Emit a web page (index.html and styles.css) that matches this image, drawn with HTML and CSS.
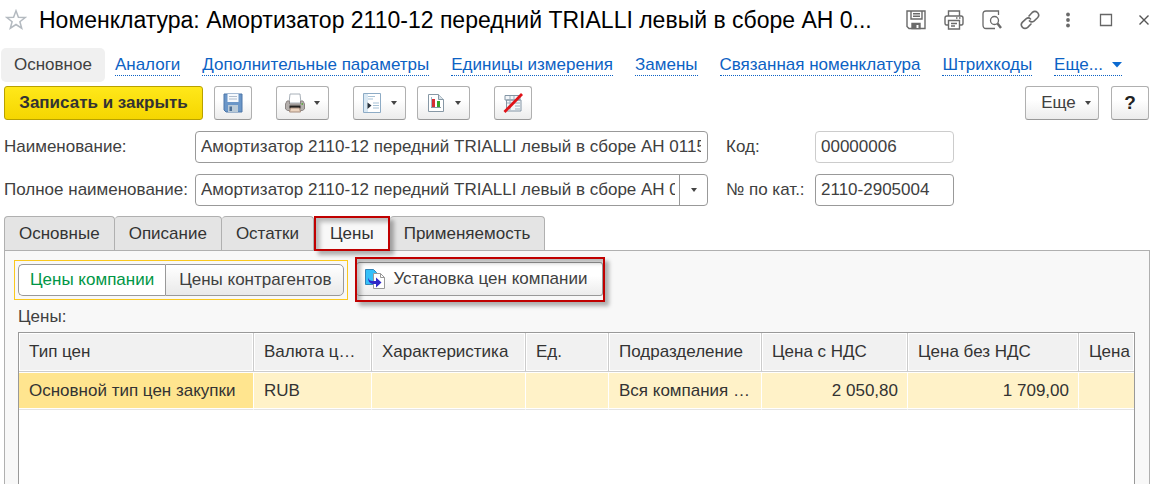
FILE: index.html
```html
<!DOCTYPE html>
<html lang="ru">
<head>
<meta charset="utf-8">
<title>Номенклатура</title>
<link rel="stylesheet" href="styles.css">
</head>
<body>
<header class="titlebar">
  <button class="icon-btn star" aria-label="Избранное">
    <svg width="22" height="22" viewBox="0 0 22 22"><path d="M11 1.8l2.4 6.4 6.8.3-5.300 4.200 1.800 6.500L11 15.500l-5.700 3.700 1.800-6.500L1.800 8.500l6.800-.3z" fill="none" stroke="#b4bac0" stroke-width="1.500"/></svg>
  </button>
  <h1 class="title">Номенклатура: Амортизатор 2110-12 передний TRIALLI левый в сборе АН 0...</h1>
  <div class="window-tools">
    <button class="icon-btn" aria-label="Сохранить">
      <svg width="20" height="20" viewBox="0 0 20 20" fill="none" stroke="#6a6a6a" stroke-width="1.400"><path d="M1 1h18v17.500H3L1 16.500z"/><path d="M5 1v8h11V1M7 3.800h7M7 6.300h7"/><path d="M6 18.500v-5h8v5z" fill="#6a6a6a"/><path d="M11.500 15v3" stroke="#fff" stroke-width="2"/></svg>
    </button>
    <button class="icon-btn" aria-label="Печать">
      <svg width="20" height="20" viewBox="0 0 20 20" fill="none" stroke="#6a6a6a" stroke-width="1.400"><path d="M4.500 6V1h11v5M4 15H2.500Q1 15 1 13V8q0-2 2-2h14q2 0 2 2v5q0 2-1.500 2H16"/><path d="M4.500 10.500h11V19h-11zM7 13.500h6M7 16h4M12 8h1.500M15 8h1.500"/></svg>
    </button>
    <button class="icon-btn" aria-label="Просмотр">
      <svg width="20" height="20" viewBox="0 0 20 20" fill="none" stroke="#6a6a6a" stroke-width="1.300"><path d="M16.500 5V1H4Q1 1 1 4v11q0 3.500 3 3.500h9"/><circle cx="12.500" cy="10.500" r="4"/><path d="M15.500 13.500l3.500 4.500" stroke-width="2.400"/></svg>
    </button>
    <button class="icon-btn" aria-label="Ссылка">
      <svg width="20" height="20" viewBox="0 0 20 20" fill="none" stroke="#6a6a6a" stroke-width="1.600" stroke-linecap="round"><path d="M9 6l3.200-3.500q2.800-2.200 5.300 0 2.500 2.800 0 5.300l-3.500 3.300q-2.500 1.700-4.500-.2M11 14l-3.300 3.300q-2.800 2.300-5.200 0-2.500-2.500 0-5.200L6 8.800q2.500-1.800 4.500.2"/></svg>
    </button>
    <button class="icon-btn" aria-label="Меню">
      <svg width="20" height="20" viewBox="0 0 20 20" fill="#6a6a6a"><circle cx="10" cy="4.500" r="1.900"/><circle cx="10" cy="10" r="1.900"/><circle cx="10" cy="15.500" r="1.900"/></svg>
    </button>
    <button class="icon-btn" aria-label="Развернуть">
      <svg width="20" height="20" viewBox="0 0 20 20"><path d="M4.500 4.500h11v11h-11z" fill="none" stroke="#666" stroke-width="1.300"/></svg>
    </button>
    <button class="icon-btn" aria-label="Закрыть">
      <svg width="20" height="20" viewBox="0 0 20 20"><path d="M5.500 5.500l9 9M14.500 5.500l-9 9" stroke="#555" stroke-width="1.400"/></svg>
    </button>
  </div>
</header>

<nav class="nav">
  <span class="nav-current">Основное</span>
  <a href="#">Аналоги</a>
  <a href="#">Дополнительные параметры</a>
  <a href="#">Единицы измерения</a>
  <a href="#">Замены</a>
  <a href="#">Связанная номенклатура</a>
  <a href="#">Штрихкоды</a>
  <a href="#" class="nav-more">Еще... <svg width="10" height="6" viewBox="0 0 10 6"><path d="M0 0h10L5 5.500z" fill="#0c6ad0"/></svg></a>
</nav>

<div class="toolbar">
  <button class="btn primary">Записать и закрыть</button>
  <button class="btn square" aria-label="Записать">
    <svg width="20" height="20" viewBox="0 0 20 20"><path d="M1 1h18v18H3l-2-2z" fill="#6a96c8" stroke="#4c76a8"/><path d="M4.500 1h11v8h-11z" fill="#f6f9fd"/><path d="M6 3.500h8M6 6h8" stroke="#b0bccb"/><path d="M5 12h10v7H5z" fill="#b9cad8"/><path d="M6.500 13.500H9V18H6.500z" fill="#4c6f96"/></svg>
  </button>
  <button class="btn drop" aria-label="Печать">
    <svg width="20" height="20" viewBox="0 0 20 20"><path d="M5 1h10l1 9H4z" fill="#fff" stroke="#a8b0b8"/><path d="M2 8h2.500v3h11V8H18l1.500 3v5l-2 1.500h-15L.5 16v-5z" fill="#b4afac" stroke="#8b8583"/><path d="M4.500 12.500h11v3h-11z" fill="#252321"/><path d="M5.500 15h9l1 4h-11z" fill="#ecd4bf" stroke="#a58c7c"/><path d="M16.500 11h1.500" stroke="#67a94b" stroke-width="2"/></svg>
    <i class="caret"></i>
  </button>
  <button class="btn drop" aria-label="Создать на основании">
    <svg width="20" height="20" viewBox="0 0 20 20"><path d="M1.500.5h17v19h-17z" fill="#fff" stroke="#8dabc5"/><path d="M2 1h4v18H2z" fill="#d9e8f3"/><path d="M6 3.500h7M6 6h5M11 10h6M11 12.500h6M11 15h6" stroke="#a7c2d6" stroke-width="1.200"/><path d="M5.500 9.500L9.500 12.500l-4 3.500z" fill="#28323c"/></svg>
    <i class="caret"></i>
  </button>
  <button class="btn drop near" aria-label="Отчеты">
    <svg width="20" height="20" viewBox="0 0 20 20"><path d="M2.500 1.500h10l5 5v12h-15z" fill="#fff" stroke="#8798a5"/><path d="M12.500 1.500v5h5" fill="#d8e1e8" stroke="#8798a5"/><path d="M5.500 4v10" stroke="#9fb7ca"/><path d="M6 6h3v8H6z" fill="#d62e32"/><path d="M11 8h3v6h-3z" fill="#37a32c"/><path d="M5 14.500h10" stroke="#8798a5"/></svg>
    <i class="caret"></i>
  </button>
  <button class="btn square" aria-label="Отключить">
    <svg width="20" height="20" viewBox="0 0 20 20"><path d="M2 2.500h15V7H2zM3.500 7v11H18V7z" fill="#f3f6f9" stroke="#8496a5"/><path d="M7 3v14M11 3v5M4 10h13M12 13h5M12 16h5" stroke="#9dafbd"/><path d="M19 1L1.500 19" stroke="#e01218" stroke-width="2.800"/></svg>
  </button>
  <button class="btn drop more">Еще <i class="caret"></i></button>
  <button class="btn square help">?</button>
</div>

<form class="fields">
  <label for="name">Наименование:</label>
  <input id="name" value="Амортизатор 2110-12 передний TRIALLI левый в сборе АН 01153">
  <label for="code">Код:</label>
  <input id="code" class="muted" value="00000006">
  <label for="full">Полное наименование:</label>
  <div class="combo">
    <input id="full" value="Амортизатор 2110-12 передний TRIALLI левый в сборе АН 01153">
    <button type="button" aria-label="Выбрать"><i class="caret"></i></button>
  </div>
  <label for="cat">№ по кат.:</label>
  <input id="cat" value="2110-2905004">
</form>

<div class="tabs" role="tablist">
  <button class="tab" role="tab">Основные</button>
  <button class="tab" role="tab">Описание</button>
  <button class="tab" role="tab">Остатки</button>
  <button class="tab active marked" role="tab" aria-selected="true">Цены</button>
  <button class="tab" role="tab">Применяемость</button>
</div>

<main class="panel">
  <div class="commands">
    <div class="switch">
      <button class="seg on">Цены компании</button><button class="seg">Цены контрагентов</button>
    </div>
    <div class="command marked">
      <button class="btn set-prices">
        <svg width="20" height="20" viewBox="0 0 20 20"><path d="M.5.500h8l3 3v12H.5z" fill="#35c0f8" stroke="#3485b8"/><path d="M8.500 4.500h7l4 4v11h-11z" fill="#fff" stroke="#999"/><path d="M15.500 4.500v4h4" fill="none" stroke="#999"/><path d="M3 8.500q1 4 6 3.500l2 0V8.500l5.500 5-5.500 5V15H9Q3 15.500 3 8.500z" fill="#3028c8"/></svg>
        Установка цен компании
      </button>
    </div>
  </div>
  <div class="caption" id="prices">Цены:</div>
  <div class="grid">
    <table aria-labelledby="prices">
      <colgroup><col class="c1"><col class="c2"><col class="c3"><col class="c4"><col class="c5"><col class="c6"><col class="c7"><col></colgroup>
      <thead>
        <tr><th>Тип цен</th><th>Валюта ц…</th><th>Характеристика</th><th>Ед.</th><th>Подразделение</th><th>Цена с НДС</th><th>Цена без НДС</th><th class="cut">Цена</th></tr>
      </thead>
      <tbody>
        <tr><td class="current">Основной тип цен закупки</td><td>RUB</td><td></td><td></td><td>Вся компания …</td><td class="num">2 050,80</td><td class="num">1 709,00</td><td></td></tr>
      </tbody>
    </table>
  </div>
</main>
</body>
</html>
```
FILE: styles.css
```css
* { box-sizing: border-box; }
body {
  margin: 0;
  min-height: 100vh;
  display: flex;
  flex-direction: column;
  background: #fff;
  color: #404040;
  font: 17px/20px "Liberation Sans", Arial, sans-serif;
  overflow: hidden;
}
button, input { font: inherit; color: inherit; margin: 0; }
button { padding: 0; }
svg { display: block; flex: none; }

.titlebar { display: flex; align-items: center; height: 40px; padding: 0 4px 0 5px; }
.icon-btn { border: 0; background: none; flex: none; }
.title {
  flex: 1;
  min-width: 0;
  margin: 0 12px;
  color: #000;
  font-size: 23px;
  line-height: 32px;
  font-weight: 400;
  white-space: nowrap;
  overflow: hidden;
  text-overflow: ellipsis;
}
.window-tools { display: flex; gap: 18px; }

.nav { display: flex; align-items: center; gap: 22px; height: 42px; margin-top: 4px; white-space: nowrap; }
.nav-current { margin: 0 -12px 0 1px; padding: 7px 13px; border-radius: 5px; background: #f0f0f0; }
.nav a { color: #0c62c4; text-decoration: none; border-bottom: 1px dotted #0c62c4; }
.nav .nav-more { display: flex; align-items: center; gap: 9px; }

.toolbar { display: flex; align-items: center; gap: 24px; padding: 0 9px 0 4px; }
.btn {
  display: flex;
  align-items: center;
  justify-content: center;
  height: 34px;
  border: 1px solid #b0b0b0;
  border-bottom-color: #999;
  border-radius: 3px;
  background: linear-gradient(#fff 40%, #ececec);
}
.primary {
  width: 199px;
  margin-right: -13px;
  border-color: #b8a100;
  background: linear-gradient(#ffe81a, #f5d600);
  color: #333;
  font-weight: 700;
}
.square { width: 38px; }
.drop { width: 53px; gap: 9px; }
.near { margin-left: -13px; }
.more { width: 74px; margin-left: auto; margin-right: -12px; padding-left: 8px; }
.help { color: #222; font-weight: 700; font-size: 19px; }
.caret { flex: none; border: 3px solid transparent; border-top: 4px solid #444; border-bottom: 0; }

.fields {
  display: grid;
  grid-template-columns: 191px minmax(0, 513px) 107px 139px;
  row-gap: 11px;
  align-items: center;
  margin: 11px 4px 10px;
}
.fields label { white-space: nowrap; }
#code, #cat, #name, .combo { height: 32px; border: 1px solid #999; border-radius: 4px; background: #fff; }
.fields input { width: 100%; min-width: 0; padding: 0 6px 0 5px; outline: 0; }
#code.muted { border-color: #ccc; }
label[for="code"], label[for="cat"] { padding-left: 18px; }
.combo { display: flex; }
.combo input { flex: 1; border: 0; padding-right: 4px; background: none; }
.combo button { width: 28px; display: flex; align-items: center; justify-content: center; border: 0; border-left: 1px solid #999; background: none; }

.tabs { display: flex; margin: 0 4px; }
.tab {
  height: 35px;
  padding: 0 14px;
  border: 1px solid #b0b0b0;
  border-bottom: 0;
  border-left-width: 0;
  border-radius: 4px 4px 0 0;
  background: #e4e4e4;
  color: #333;
}
.tab:first-child { border-left-width: 1px; }
.tab.active { padding: 0 16px; border: 0; border-radius: 0; background: #f8f8f8; }

/* Red callout frame with a shadow falling both inside and outside */
.marked { position: relative; z-index: 1; }
.marked::after {
  content: "";
  position: absolute;
  inset: 0;
  border: 2px solid #c00000;
  box-shadow: 4px 4px 4px rgba(0, 0, 0, .3), inset 4px 4px 4px rgba(0, 0, 0, .25);
  pointer-events: none;
}

.panel {
  flex: 1;
  display: flex;
  flex-direction: column;
  margin: -1px 8px 0 4px;
  padding: 6px 14px 0 9px;
  border: 1px solid #b0b0b0;
  border-bottom: 0;
  background: #f8f8f8;
}
.commands { display: flex; align-items: center; gap: 7px; }
.switch { display: flex; padding: 3px; border: 1px solid #fac81e; }
.seg { height: 32px; padding: 0 12px 0 13px; border: 1px solid #999; border-radius: 0 5px 5px 0; background: linear-gradient(#fff, #e9e9e9); }
.seg.on { padding: 0 11px; border-right: 0; border-radius: 5px 0 0 5px; background: #fff; color: #009646; }
.command { padding: 5px 2px 6px; background: #f8f8f8; }
.set-prices { gap: 8px; padding: 0 15px 0 8px; border-color: #999; border-left: 0; }
.caption { margin: 5px 0 5px 4px; }
.grid { flex: 1; margin-left: 4px; border: 1px solid #999; border-bottom: 0; background: #fff; overflow: hidden; }

table { width: 100%; table-layout: fixed; border-collapse: separate; border-spacing: 0; color: #333; }
.c1 { width: 235px; }
.c2 { width: 118px; }
.c3 { width: 154px; }
.c4 { width: 83px; }
.c5 { width: 153px; }
.c6 { width: 146px; }
.c7 { width: 171px; }
th, td { padding: 0 9px 0 10px; text-align: left; font-weight: 400; white-space: nowrap; overflow: hidden; text-overflow: ellipsis; }
th { height: 39px; border-right: 1px solid #ccc; border-bottom: 1px solid #ccc; background: #f1f1f1; box-shadow: inset 0 0 0 1px #fff; }
td { height: 38px; border-right: 1px solid #fff; border-bottom: 1px solid #e4e4e4; background: #fff2c8; box-shadow: inset 0 1px #fff, inset 0 -1px #fff; }
td.current { background: #ffe58f; }
td.num { text-align: right; }
th:last-child, td:last-child { border-right: 0; }
th.cut { padding-right: 0; text-overflow: clip; }
```
